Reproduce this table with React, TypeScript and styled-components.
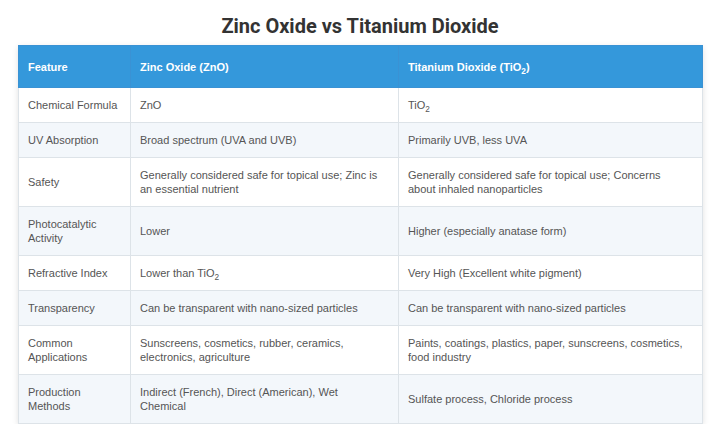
import React from "react";
import styled, { createGlobalStyle } from "styled-components";

const GlobalStyle = createGlobalStyle`
  html, body {
    margin: 0;
    padding: 0;
    background: #ffffff;
  }
  body {
    font-family: "Liberation Sans", Arial, sans-serif;
  }
`;

const Page = styled.div`
  width: 720px;
  padding: 14px 18px 0;
  box-sizing: border-box;
`;

const Title = styled.h1`
  margin: 0 0 7px;
  font-family: Roboto, "Liberation Sans", sans-serif;
  font-weight: 700;
  font-size: 20px;
  line-height: 24px;
  color: #333333;
  text-align: center;
`;

const Table = styled.table`
  width: 684px;
  border-collapse: collapse;
  table-layout: fixed;
  box-shadow: 0 2px 6px rgba(0, 0, 0, 0.12);
  font-size: 11px;
  line-height: 14px;
`;

const Col = styled.col<{ $w: number }>`
  width: ${(p) => p.$w}px;
`;

const HeadCell = styled.th<{ $first?: boolean }>`
  background: #3498db;
  color: #ffffff;
  font-weight: 700;
  text-align: left;
  padding: 13.5px ${(p) => (p.$first ? 6 : 15)}px 13.5px 9px;
  border: 1px solid #3a92d4;
  vertical-align: middle;
`;

const Row = styled.tr<{ $alt: boolean }>`
  background: ${(p) => (p.$alt ? "#f3f7fb" : "#ffffff")};
`;

const Cell = styled.td<{ $first?: boolean }>`
  color: #555555;
  padding: 10px ${(p) => (p.$first ? 6 : 15)}px 10px 9px;
  border: 1px solid #dde3e8;
  vertical-align: middle;
`;

const Sub = styled.sub`
  font-size: 0.75em;
  line-height: 0;
`;

const TiO2 = () => (
  <>
    TiO<Sub>2</Sub>
  </>
);

const rows: [React.ReactNode, React.ReactNode, React.ReactNode][] = [
  ["Chemical Formula", "ZnO", <TiO2 />],
  ["UV Absorption", "Broad spectrum (UVA and UVB)", "Primarily UVB, less UVA"],
  [
    "Safety",
    "Generally considered safe for topical use; Zinc is an essential nutrient",
    "Generally considered safe for topical use; Concerns about inhaled nanoparticles",
  ],
  ["Photocatalytic Activity", "Lower", "Higher (especially anatase form)"],
  [
    "Refractive Index",
    <>
      Lower than <TiO2 />
    </>,
    "Very High (Excellent white pigment)",
  ],
  [
    "Transparency",
    "Can be transparent with nano-sized particles",
    "Can be transparent with nano-sized particles",
  ],
  [
    "Common Applications",
    "Sunscreens, cosmetics, rubber, ceramics, electronics, agriculture",
    "Paints, coatings, plastics, paper, sunscreens, cosmetics, food industry",
  ],
  [
    "Production Methods",
    "Indirect (French), Direct (American), Wet Chemical",
    "Sulfate process, Chloride process",
  ],
];

export default function App() {
  return (
    <>
      <GlobalStyle />
      <Page>
        <Title>Zinc Oxide vs Titanium Dioxide</Title>
        <Table>
          <colgroup>
            <Col $w={112} />
            <Col $w={268} />
            <Col $w={304} />
          </colgroup>
          <thead>
            <tr>
              <HeadCell $first>Feature</HeadCell>
              <HeadCell>Zinc Oxide (ZnO)</HeadCell>
              <HeadCell>
                Titanium Dioxide (<TiO2 />)
              </HeadCell>
            </tr>
          </thead>
          <tbody>
            {rows.map((r, i) => (
              <Row key={i} $alt={i % 2 === 1}>
                <Cell $first>{r[0]}</Cell>
                <Cell>{r[1]}</Cell>
                <Cell>{r[2]}</Cell>
              </Row>
            ))}
          </tbody>
        </Table>
      </Page>
    </>
  );
}
